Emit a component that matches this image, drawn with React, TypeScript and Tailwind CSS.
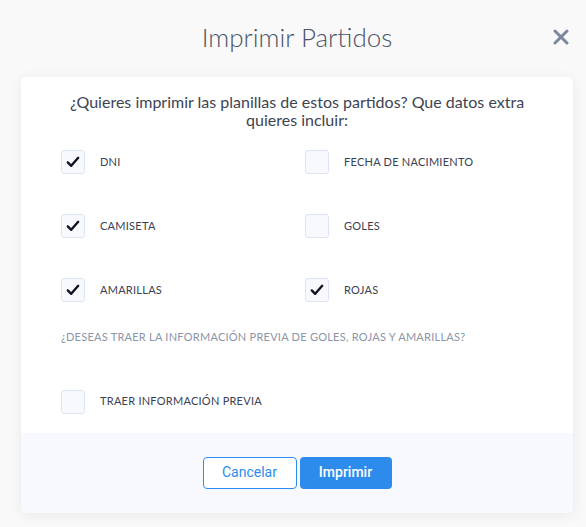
import React from "react";

type Option = { label: string; checked: boolean };

const left: Option[] = [
  { label: "DNI", checked: true },
  { label: "CAMISETA", checked: true },
  { label: "AMARILLAS", checked: true },
];
const right: Option[] = [
  { label: "FECHA DE NACIMIENTO", checked: false },
  { label: "GOLES", checked: false },
  { label: "ROJAS", checked: true },
];

function Check({ checked }: { checked: boolean }) {
  return (
    <span className="flex h-6 w-6 shrink-0 items-center justify-center rounded-[3px] border border-[#dde3f7] bg-[#f8f9ff]">
      {checked && (
        <svg width="14" height="12" viewBox="0 0 14 12" fill="none">
          <path d="M1.8 6.4 L5.2 9.8 L12.2 1.8" stroke="#111322" strokeWidth="2.4" strokeLinecap="round" strokeLinejoin="round" />
        </svg>
      )}
    </span>
  );
}

function Row({ o }: { o: Option }) {
  return (
    <label className="flex h-6 items-center gap-[15px]">
      <Check checked={o.checked} />
      <span className="text-[11px] tracking-[0.25px] text-[#3a4152]">{o.label}</span>
    </label>
  );
}

export default function App() {
  return (
    <div className="min-h-[527px] w-full bg-[#f9f9f9] pl-[21px] pr-[13px] pt-[18px]" style={{ fontFamily: "Lato, 'Noto Sans', sans-serif" }}>
      <div className="relative flex h-[37px] items-center justify-center">
        <h1 className="text-[26px] font-light leading-none text-[#4a5468]">Imprimir Partidos</h1>
        <button className="absolute right-[4px] top-[11px] text-[#7b879c]">
          <svg width="16" height="16" viewBox="0 0 16 16" fill="none">
            <path d="M2 2 L14 14 M14 2 L2 14" stroke="currentColor" strokeWidth="3" strokeLinecap="round" />
          </svg>
        </button>
      </div>
      <div className="mt-[22px] overflow-hidden rounded-[5px] bg-white shadow-[0_2px_14px_rgba(0,0,0,0.07)]">
        <div className="px-[40px] pb-[19px] pt-[16px]">
          <p className="mx-auto max-w-[470px] text-center text-[16px] leading-[18px] text-[#3c4453]">
            ¿Quieres imprimir las planillas de estos partidos? Que datos extra quieres incluir:
          </p>
          <div className="mt-[21px] grid grid-cols-[244px_1fr] gap-y-[40px]">
            {left.map((o, i) => (
              <React.Fragment key={o.label}>
                <Row o={o} />
                <Row o={right[i]} />
              </React.Fragment>
            ))}
          </div>
          <p className="mt-[27px] text-[11px] tracking-[0.25px] text-[#8a95a8]">
            ¿DESEAS TRAER LA INFORMACIÓN PREVIA DE GOLES, ROJAS Y AMARILLAS?
          </p>
          <div className="mt-[44px]">
            <Row o={{ label: "TRAER INFORMACIÓN PREVIA", checked: false }} />
          </div>
        </div>
        <div className="flex h-[80px] items-center justify-center gap-[3px] bg-[#f8f9fe]" style={{ fontFamily: "Roboto, 'Liberation Sans', sans-serif" }}>
          <button className="h-[32px] w-[94px] rounded-[4px] border border-[#2d8cf0] bg-white text-[14px] text-[#2d8cf0]">
            Cancelar
          </button>
          <button className="h-[32px] w-[92px] rounded-[4px] bg-[#2d8ceb] text-[14px] font-medium text-white">
            Imprimir
          </button>
        </div>
      </div>
    </div>
  );
}
